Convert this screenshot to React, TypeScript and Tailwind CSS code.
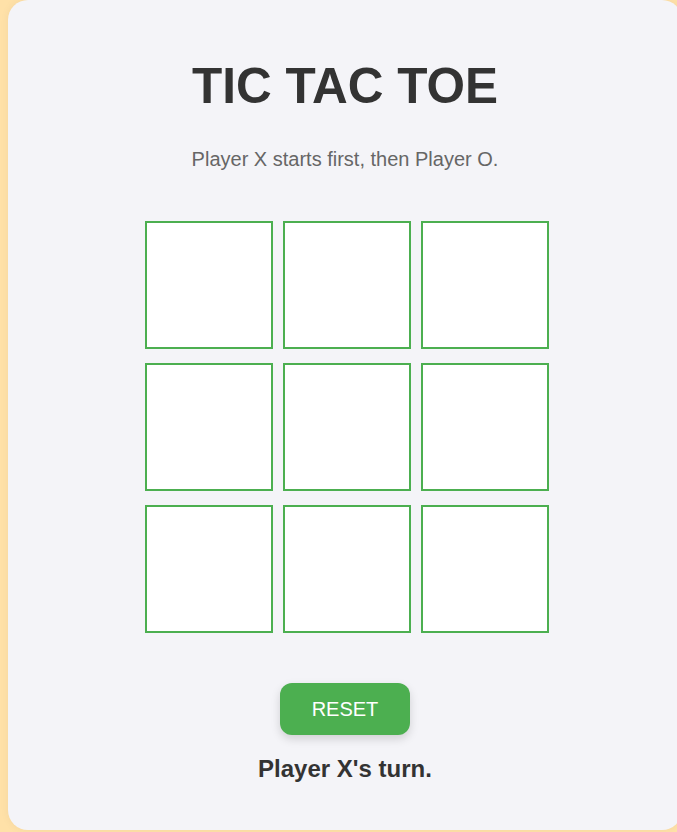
import React, { useState } from "react";

export default function App() {
  const [cells, setCells] = useState<string[]>(Array(9).fill(""));
  const [turn, setTurn] = useState<"X" | "O">("X");

  const click = (i: number) => {
    if (cells[i]) return;
    const next = cells.slice();
    next[i] = turn;
    setCells(next);
    setTurn(turn === "X" ? "O" : "X");
  };

  return (
    <div
      className="w-full h-[832px] overflow-hidden bg-[#ffe1a8]"
      style={{ fontFamily: '"Liberation Sans", Arial, sans-serif' }}
    >
      <div className="ml-[8px] w-[674px] h-[830px] rounded-[20px] bg-[#f4f4f8] flex flex-col items-center shadow-[0_0_10px_rgba(0,0,0,0.05)]">
        <h1 className="mt-[58px] text-[49.5px] leading-[56px] font-bold text-[#333333]">
          TIC TAC TOE
        </h1>
        <p className="mt-[33px] text-[20px] leading-[24px] text-[#666666]">
          Player X starts first, then Player O.
        </p>
        <div className="mt-[50px] ml-[4px] grid grid-cols-[128px_128px_128px] gap-x-[10px] gap-y-[14px]">
          {cells.map((c, i) => (
            <button
              key={i}
              onClick={() => click(i)}
              className="w-[128px] h-[128px] border-2 border-[#4caf50] bg-white text-[56px] font-bold text-[#333333] flex items-center justify-center"
            >
              {c}
            </button>
          ))}
        </div>
        <button
          onClick={() => {
            setCells(Array(9).fill(""));
            setTurn("X");
          }}
          className="mt-[50px] w-[130px] h-[52px] rounded-[12px] bg-[#4caf50] text-white text-[20px] leading-[24px] shadow-[0_4px_10px_rgba(0,0,0,0.15)]"
        >
          RESET
        </button>
        <p className="mt-[20px] text-[24px] leading-[28px] font-bold text-[#333333]">
          Player {turn}'s turn.
        </p>
      </div>
    </div>
  );
}
